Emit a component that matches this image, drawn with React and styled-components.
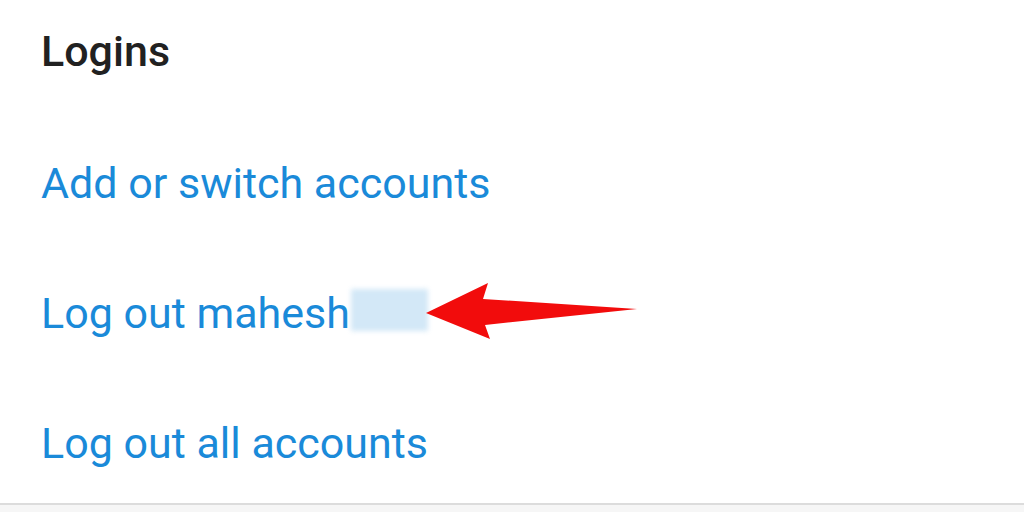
import React from 'react';
import styled, { createGlobalStyle } from 'styled-components';

const GlobalStyle = createGlobalStyle`
  html, body {
    margin: 0;
    padding: 0;
    background: #ffffff;
  }
  body {
    font-family: Roboto, "Noto Sans", Arial, sans-serif;
  }
`;

const Page = styled.div`
  width: 1024px;
  height: 512px;
  overflow: hidden;
  background: #ffffff;
`;

const Section = styled.section`
  height: 505px;
  box-sizing: border-box;
  border-bottom: 2px solid #dcdcdc;
  padding-left: 41px;
`;

const Heading = styled.h2`
  margin: 0;
  padding-top: 27px;
  height: 91px;
  font-size: 43px;
  line-height: 48px;
  font-weight: 500;
  color: #212121;
`;

const Item = styled.div`
  display: flex;
  align-items: center;
  height: 130px;
  font-size: 43px;
  line-height: 130px;
  color: #1a8ad9;
`;

const Blur = styled.span`
  display: inline-block;
  width: 77px;
  height: 42px;
  margin-left: 1px;
  background: #d3e8f7;
  filter: blur(2.5px);
  transform: translateY(-3px);
`;

const Footer = styled.div`
  height: 7px;
  background: #f6f6f6;
`;

const Arrow = styled.svg`
  position: absolute;
  left: 420px;
  top: 275px;
  overflow: visible;
`;

const Wrap = styled.div`
  position: relative;
`;

export default function App() {
  return (
    <Page>
      <GlobalStyle />
      <Wrap>
        <Section>
          <Heading>Logins</Heading>
          <Item>Add or switch accounts</Item>
          <Item>
            Log out mahesh
            <Blur />
          </Item>
          <Item>Log out all accounts</Item>
        </Section>
        <Footer />
        <Arrow width="225" height="75" viewBox="420 275 225 75">
          <polygon
            points="426,313 488,283 483,299 637,309 485,325 490,339"
            fill="#f20c0c"
          />
        </Arrow>
      </Wrap>
    </Page>
  );
}
